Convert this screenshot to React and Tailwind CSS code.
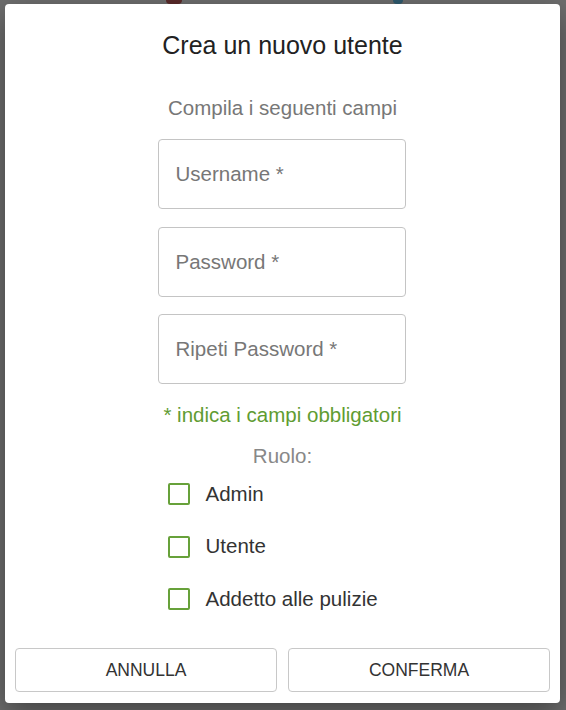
import { useState } from "react";

const ROLES = ["Admin", "Utente", "Addetto alle pulizie"];
const FIELDS = ["Username *", "Password *", "Ripeti Password *"];

export default function App() {
  const [checked, setChecked] = useState({});

  const toggle = (role) => {
    setChecked((prev) => ({ ...prev, [role]: !prev[role] }));
  };

  return (
    <div
      className="relative w-[566px] h-[710px] bg-[#6e6e6e] overflow-hidden"
      style={{ fontFamily: '"Liberation Sans", Arial, sans-serif' }}
    >
      {/* dimmed page behind the dialog */}
      <div className="absolute left-[166px] top-[-4px] w-[16px] h-[8px] rounded-full bg-[#5a2a2a]" />
      <div className="absolute left-[393px] top-[-4px] w-[10px] h-[8px] rounded-full bg-[#2f5a6e]" />

      {/* Dialog */}
      <div className="relative ml-[5px] mt-[4px] w-[555px] h-[699px] bg-white rounded-[4px] shadow-[0_10px_30px_rgba(0,0,0,0.4)] flex flex-col items-center">
        <h1 className="mt-[27px] text-[25px] leading-[29px] text-[#222]">Crea un nuovo utente</h1>

        <p className="mt-[36px] text-[20.5px] leading-[24px] text-[#777]">Compila i seguenti campi</p>

        {/* Inputs */}
        <div className="mt-[19px] flex flex-col gap-[17.5px] -translate-x-[1px]">
          {FIELDS.map((f) => (
            <input
              key={f}
              placeholder={f}
              className="w-[248px] h-[70px] border border-[#c4c4c4] rounded-[4px] px-[17px] text-[20.5px] text-[#333] placeholder:text-[#777] outline-none"
            />
          ))}
        </div>

        <p className="mt-[19px] text-[20.5px] leading-[24px] text-[#5f9c32]">* indica i campi obbligatori</p>

        <p className="mt-[17px] text-[20.5px] leading-[24px] text-[#888]">Ruolo:</p>

        {/* Roles */}
        <div className="w-[248px] pl-[9px] flex flex-col">
          {ROLES.map((r) => (
            <label key={r} className="h-[52.5px] flex items-center gap-[16px] cursor-pointer">
              <span
                onClick={() => toggle(r)}
                className="w-[22px] h-[22px] border-[2.5px] border-[#67a13a] rounded-[2px] flex items-center justify-center"
              >
                {checked[r] && <span className="w-[10px] h-[10px] bg-[#67a13a]" />}
              </span>
              <span className="text-[20.5px] text-[#333]">{r}</span>
            </label>
          ))}
        </div>

        {/* Buttons */}
        <div className="mt-auto mb-[11px] w-full px-[10px] flex gap-[11px]">
          <button className="flex-1 h-[44px] border border-[#c8c8c8] rounded-[4px] bg-white text-[17.5px] text-[#333] uppercase">
            Annulla
          </button>
          <button className="flex-1 h-[44px] border border-[#c8c8c8] rounded-[4px] bg-white text-[17.5px] text-[#333] uppercase">
            Conferma
          </button>
        </div>
      </div>
    </div>
  );
}
